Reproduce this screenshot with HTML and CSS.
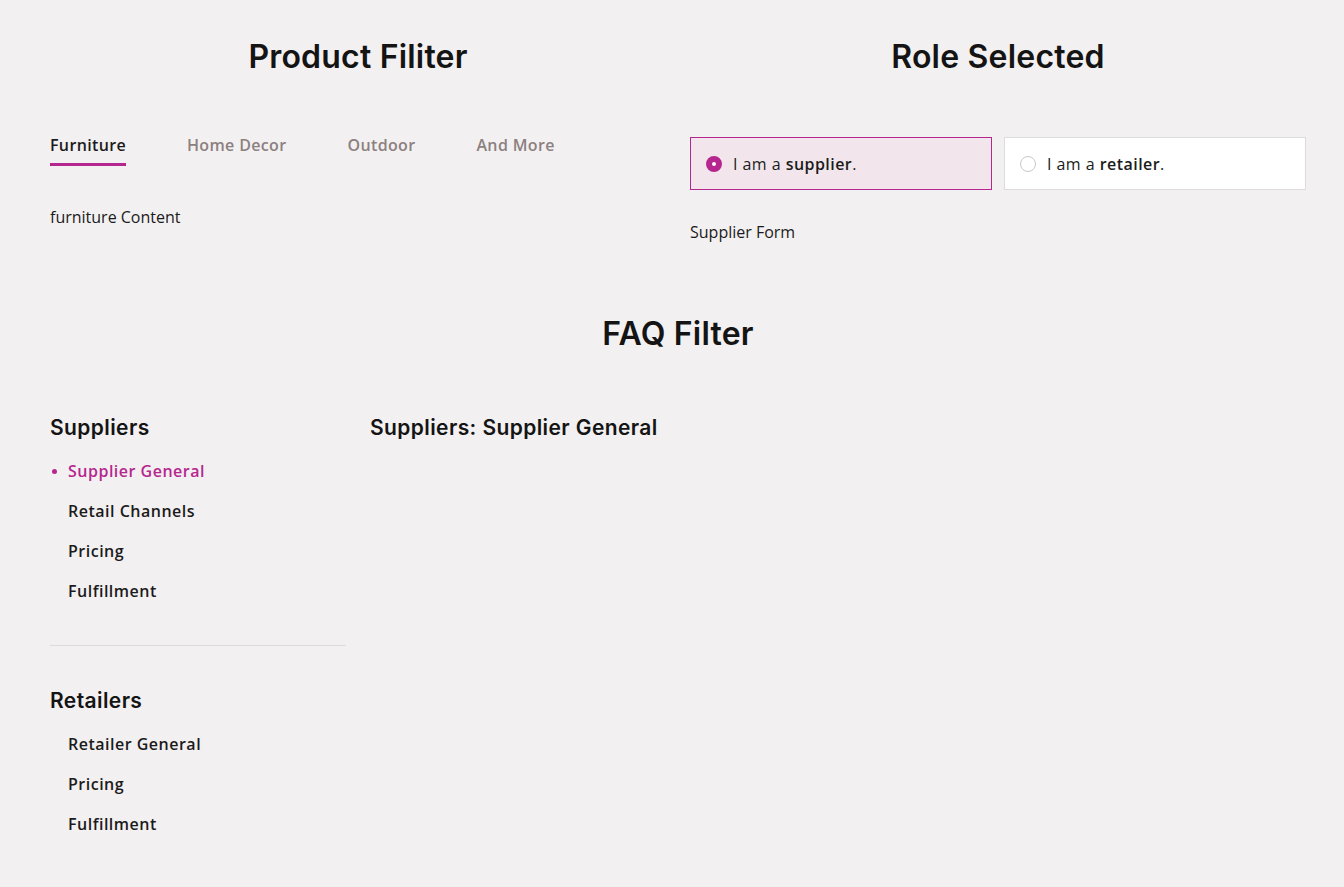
FILE: index.html
```html
<!DOCTYPE html>
<html lang="en">
<head>
<meta charset="utf-8">
<title>Filters</title>
<link rel="stylesheet" href="styles.css">
</head>
<body>
<main class="page">
  <div class="top-row">
    <section class="col">
      <h2 class="section-title">Product Filiter</h2>
      <nav class="tabs">
        <a class="tab active">Furniture</a>
        <a class="tab">Home Decor</a>
        <a class="tab">Outdoor</a>
        <a class="tab">And More</a>
      </nav>
      <p class="tab-content">furniture Content</p>
    </section>
    <section class="col">
      <h2 class="section-title">Role Selected</h2>
      <div class="roles">
        <label class="role selected"><span class="radio"></span><span>I am a <b>supplier</b>.</span></label>
        <label class="role"><span class="radio"></span><span>I am a <b>retailer</b>.</span></label>
      </div>
      <p class="role-content">Supplier Form</p>
    </section>
  </div>
  <section class="faq">
    <h2 class="section-title">FAQ Filter</h2>
    <div class="faq-body">
      <aside class="faq-side">
        <div class="group">
          <h3 class="group-title">Suppliers</h3>
          <ul class="items">
            <li class="item active">Supplier General</li>
            <li class="item">Retail Channels</li>
            <li class="item">Pricing</li>
            <li class="item">Fulfillment</li>
          </ul>
        </div>
        <div class="group second">
          <h3 class="group-title">Retailers</h3>
          <ul class="items">
            <li class="item">Retailer General</li>
            <li class="item">Pricing</li>
            <li class="item">Fulfillment</li>
          </ul>
        </div>
      </aside>
      <div class="faq-main">
        <h3 class="group-title">Suppliers: Supplier General</h3>
      </div>
    </div>
  </section>
</main>
</body>
</html>
```

FILE: styles.css
```css
html, body {
  margin: 0;
  padding: 0;
  background: #f3f0f1;
}
body {
  font-family: "Open Sans", "Liberation Sans", sans-serif;
  color: #1b1b1b;
}
.page {
  width: 1256px;
  margin-left: 50px;
  padding-top: 37px;
}
.top-row {
  display: flex;
  gap: 24px;
}
.col {
  flex: 1;
}
.section-title {
  margin: 0;
  text-align: center;
  font-family: "Inter", "Lato", sans-serif;
  font-weight: 600;
  font-size: 32px;
  line-height: 40px;
  letter-spacing: 0.2px;
  color: #141414;
}
.tabs {
  display: flex;
  gap: 61px;
  margin-top: 57px;
}
.tab {
  font-size: 16px;
  font-weight: 600;
  color: #8c8080;
  letter-spacing: 0.35px;
  line-height: 22px;
  padding-bottom: 7px;
  border-bottom: 3px solid transparent;
}
.tab.active {
  color: #1b1b1b;
  border-bottom-color: #b5278f;
}
.tab-content {
  margin: 40px 0 0;
  font-size: 16px;
  line-height: 22px;
}
.roles {
  display: flex;
  gap: 12px;
  margin-top: 60px;
}
.role {
  flex: 1;
  height: 53px;
  box-sizing: border-box;
  border: 1px solid #dcdcdc;
  background: #fff;
  display: flex;
  align-items: center;
  padding-left: 15px;
  gap: 11px;
  font-size: 16px;
  letter-spacing: 0.45px;
}
.role b { font-weight: 600; }
.role.selected {
  background: #f2e6ec;
  border-color: #b5278f;
}
.radio {
  width: 16px;
  height: 16px;
  box-sizing: border-box;
  border-radius: 50%;
  border: 1px solid #c9c9c9;
  background: #fff;
}
.role.selected .radio {
  border: 6px solid #b5278f;
  background: #fff;
}
.role-content {
  margin: 31px 0 0;
  font-size: 16px;
  line-height: 22px;
}
.faq {
  margin-top: 71px;
}
.faq-body {
  display: flex;
  gap: 24px;
  margin-top: 60px;
}
.faq-side {
  width: 296px;
}
.group-title {
  margin: 0;
  font-family: "Inter", "Lato", sans-serif;
  font-weight: 600;
  font-size: 21px;
  line-height: 28px;
  letter-spacing: 0.4px;
  color: #141414;
}
.items {
  list-style: none;
  margin: 9px 0 0;
  padding: 0;
}
.item {
  position: relative;
  padding-left: 18px;
  font-size: 16px;
  font-weight: 600;
  letter-spacing: 0.5px;
  line-height: 40px;
  color: #1b1b1b;
}
.item.active { color: #b5278f; }
.item.active::before {
  content: "";
  position: absolute;
  left: 2px;
  top: 18px;
  width: 5px;
  height: 5px;
  border-radius: 50%;
  background: #b5278f;
}
.group {
  padding-bottom: 34px;
  border-bottom: 1px solid #dedada;
}
.group.second {
  border-bottom: 0;
  padding-top: 41px;
}
```
